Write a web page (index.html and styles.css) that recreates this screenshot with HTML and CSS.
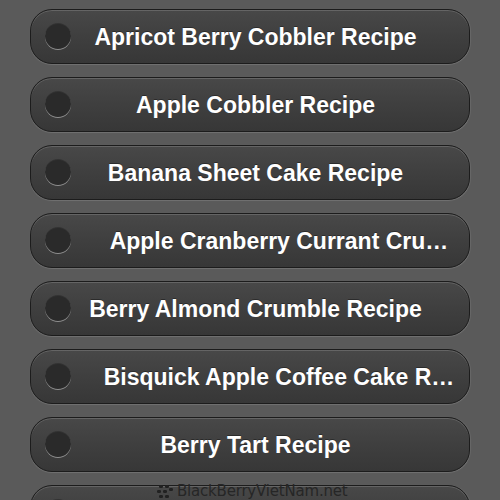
FILE: index.html
```
<!DOCTYPE html>
<html>
<head>
<meta charset="utf-8">
<link rel="stylesheet" href="styles.css">
</head>
<body>
<div class="list">
  <div class="item"><span class="radio"></span><span class="label">Apricot Berry Cobbler Recipe</span></div>
  <div class="item"><span class="radio"></span><span class="label">Apple Cobbler Recipe</span></div>
  <div class="item"><span class="radio"></span><span class="label">Banana Sheet Cake Recipe</span></div>
  <div class="item"><span class="radio"></span><span class="label label--long">Apple Cranberry Currant Cru…</span></div>
  <div class="item"><span class="radio"></span><span class="label">Berry Almond Crumble Recipe</span></div>
  <div class="item"><span class="radio"></span><span class="label label--long">Bisquick Apple Coffee Cake R…</span></div>
  <div class="item"><span class="radio"></span><span class="label">Berry Tart Recipe</span></div>
  <div class="item"><span class="radio"></span><span class="label"></span></div>
</div>
<div class="watermark">
  <svg class="bb-logo" width="16" height="13" viewBox="0 0 16 13">
    <rect x="2" y="0" width="4" height="3" rx="1.2"/>
    <rect x="8" y="0" width="4" height="3" rx="1.2"/>
    <rect x="0" y="5" width="4" height="3" rx="1.2"/>
    <rect x="6" y="5" width="4" height="3" rx="1.2"/>
    <rect x="12" y="3" width="4" height="3" rx="1.2"/>
    <rect x="2" y="10" width="4" height="3" rx="1.2"/>
    <rect x="8" y="10" width="4" height="3" rx="1.2"/>
  </svg>
  <span class="wm-text">BlackBerryVietNam.net</span>
</div>
</body>
</html>
```
FILE: styles.css
```
html, body {
  margin: 0;
  padding: 0;
  height: 100%;
  overflow: hidden;
}
body {
  background: #5a5a5a;
  font-family: "Liberation Sans", Arial, sans-serif;
  position: relative;
}
.list {
  display: flex;
  flex-direction: column;
  gap: 13px;
  padding: 9px 30px 0 30px;
}
.item {
  height: 53px;
  flex: 0 0 auto;
  display: flex;
  align-items: center;
  padding-left: 14px;
  border: 1px solid #1c1c1c;
  border-radius: 22px;
  background: linear-gradient(#484848, #3f3f3f 50%, #373737);
  box-shadow: inset 0 1px 0 rgba(255,255,255,0.16), 0 1px 1px rgba(255,255,255,0.14), 1px 0 1px rgba(255,255,255,0.08);
}
.radio {
  width: 26px;
  height: 26px;
  flex: 0 0 26px;
  border-radius: 50%;
  background: #2a2a2a;
  box-shadow: inset 0 -1px 0 rgba(210,210,210,0.6), 0 -1px 0 rgba(0,0,0,0.25);
}
.label {
  flex: 1;
  min-width: 0;
  text-align: center;
  white-space: nowrap;
  padding-right: 29px;
  color: #ffffff;
  font-weight: bold;
  font-size: 23px;
  line-height: 28px;
  text-shadow: 0 -1px 0 rgba(0,0,0,0.35);
}
.label--long {
  padding-left: 32px;
  padding-right: 14px;
}
.watermark {
  position: absolute;
  left: 157px;
  top: 483px;
  display: flex;
  align-items: center;
  gap: 4px;
}
.bb-logo {
  fill: #222222;
}
.wm-text {
  font-family: "DejaVu Sans", sans-serif;
  font-size: 15px;
  line-height: 16px;
  color: #262626;
  letter-spacing: -0.2px;
}
```
